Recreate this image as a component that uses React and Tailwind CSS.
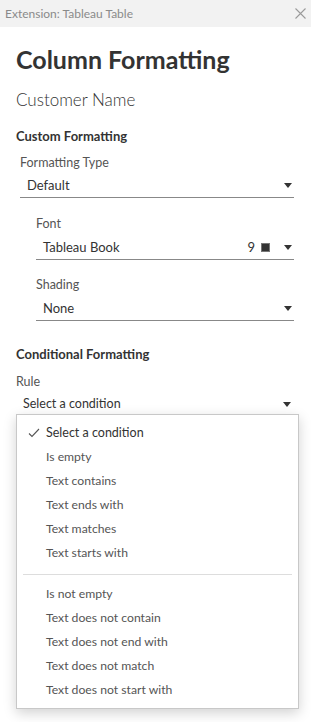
import React from 'react';

const font = { fontFamily: 'Lato, "Open Sans", sans-serif' };

const Caret = () => (
  <svg width="8" height="5" viewBox="0 0 8 5" className="shrink-0">
    <path d="M0 0 L8 0 L4 5 Z" fill="#333" />
  </svg>
);

const Select = ({ value, extra, className = '' }) => (
  <div className={`flex items-center h-[24px] border-b border-[#888] ${className}`}>
    <span className="flex-1 text-[13px] text-[#333]">{value}</span>
    {extra}
    <span className="pr-[2px]"><Caret /></span>
  </div>
);

const group1 = ['Is empty', 'Text contains', 'Text ends with', 'Text matches', 'Text starts with'];
const group2 = ['Is not empty', 'Text does not contain', 'Text does not end with', 'Text does not match', 'Text does not start with'];

export default function App() {
  return (
    <div className="w-[311px] h-[722px] bg-white relative overflow-hidden" style={font}>
      <div className="h-[27px] bg-[#f2f2f2] flex items-center justify-between pl-[5px] pr-[5px]">
        <span className="text-[12px] text-[#8a8a8a]">Extension: Tableau Table</span>
        <svg width="11" height="11" viewBox="0 0 11 11">
          <path d="M0.5 0.5 L10.5 10.5 M10.5 0.5 L0.5 10.5" stroke="#9a9a9a" strokeWidth="1.1" />
        </svg>
      </div>

      <div className="px-[16px] pr-[17px]">
        <h1 className="mt-[16px] text-[25px] font-bold text-[#333] leading-[32px]">Column Formatting</h1>
        <div className="mt-[15px] text-[17px] font-light text-[#333] leading-[20px]">Customer Name</div>

        <div className="mt-[18px] text-[13px] font-bold text-[#333] leading-[16px]">Custom Formatting</div>
        <div className="pl-[4px]">
          <div className="mt-[11px] text-[12.5px] text-[#555] leading-[16px]">Formatting Type</div>
          <Select value="Default" className="mt-[3px] pl-[7px]" />

          <div className="pl-[16px]">
            <div className="mt-[18px] text-[12.5px] text-[#555] leading-[16px]">Font</div>
            <Select
              value="Tableau Book"
              className="mt-[4px] pl-[7px]"
              extra={
                <span className="flex items-center gap-[6px] mr-[14px]">
                  <span className="text-[13px] text-[#333]">9</span>
                  <span className="w-[9px] h-[9px] bg-[#333] border border-[#777]" />
                </span>
              }
            />
            <div className="mt-[17px] text-[12.5px] text-[#555] leading-[16px]">Shading</div>
            <Select value="None" className="mt-[4px] pl-[7px]" />
          </div>
        </div>

        <div className="mt-[25px] text-[13px] font-bold text-[#333] leading-[16px]">Conditional Formatting</div>
        <div className="mt-[12px] text-[12.5px] text-[#555] leading-[16px]">Rule</div>
        <div className="mt-[6px] flex items-center pl-[7px] pr-[3px] h-[16px]">
          <span className="flex-1 text-[12.5px] text-[#333]">Select a condition</span>
          <Caret />
        </div>
      </div>

      <div className="absolute left-[16px] top-[414px] w-[283px] bg-white border border-[#c8c8c8] shadow-[0_4px_12px_rgba(0,0,0,0.18)] pt-[6px] pb-[6px]">
        <div className="h-[24px] flex items-center text-[12.5px] text-[#333]">
          <span className="w-[29px] pl-[11px]">
            <svg width="12" height="10" viewBox="0 0 12 10">
              <path d="M1 5.5 L4 8.5 L11 1" fill="none" stroke="#555" strokeWidth="1.1" />
            </svg>
          </span>
          Select a condition
        </div>
        {group1.map((t) => (
          <div key={t} className="h-[24px] flex items-center pl-[29px] text-[12.2px] text-[#555]">{t}</div>
        ))}
        <div className="mx-[6px] mt-[9px] mb-[7px] border-t border-[#ddd]" />
        {group2.map((t) => (
          <div key={t} className="h-[24px] flex items-center pl-[29px] text-[12.2px] text-[#555]">{t}</div>
        ))}
      </div>
    </div>
  );
}
